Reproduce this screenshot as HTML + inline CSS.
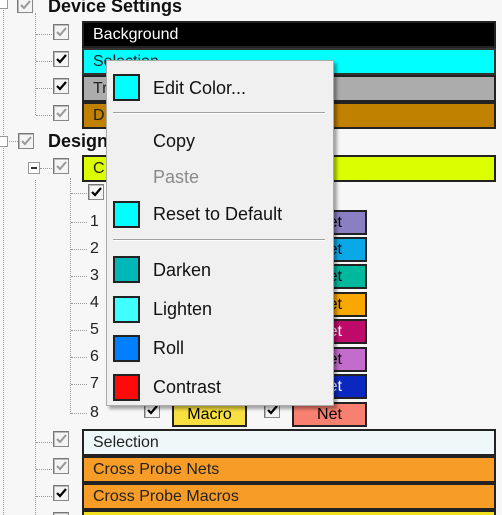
<!DOCTYPE html>
<html style="overflow:hidden;width:502px;height:515px"><head><meta charset="utf-8"><style>
body{margin:0;width:502px;height:515px;overflow:hidden;background:#f7f7f7;font-family:"Liberation Sans",Arial,sans-serif;position:relative}
.a{position:absolute}
.bar{position:absolute;left:82px;width:401px;height:23px;border:2px solid #222;font-size:16px;line-height:23px;padding-left:9px;box-sizing:content-box}
.cb{position:absolute;width:14px;height:14px;border:1px solid #888;border-top-color:#777;border-left-color:#777;background:#f4f4f4;box-shadow:inset 1px 1px 0 #bbb}
.cb svg{position:absolute;left:1px;top:1px}
.vl{position:absolute;border-left:1px dotted #999;width:0}
.hl{position:absolute;border-top:1px dotted #999;height:0}
.net{position:absolute;left:292px;width:71px;height:21px;border:2px solid #222;font-size:16px;line-height:21px;text-align:center}
.num{position:absolute;left:90px;font-size:16px;color:#222}
.menu{position:absolute;left:106px;top:60px;width:226px;height:344px;background:#f0f0f0;border:1px solid #aaa;box-shadow:3px 3px 3px rgba(0,0,0,.35)}
.mi{position:absolute;left:46px;font-size:18px;color:#111}
.sw{position:absolute;left:6px;width:23px;height:23px;border:2px solid #222}
.sep{position:absolute;left:6px;width:212px;border-top:1px solid #a0a0a0;border-bottom:1px solid #fff}
.bold{position:absolute;font-weight:bold;font-size:18px;color:#111}
</style></head><body>
<div class="vl" style="left:3px;top:0;height:515px"></div>
<div class="vl" style="left:35px;top:13px;height:102px"></div>
<div class="vl" style="left:35px;top:180px;height:335px"></div>
<div class="vl" style="left:70px;top:178px;height:236px"></div>
<div class="hl" style="left:36px;top:34px;width:18px"></div>
<div class="hl" style="left:36px;top:61px;width:18px"></div>
<div class="hl" style="left:36px;top:88px;width:18px"></div>
<div class="hl" style="left:36px;top:115px;width:18px"></div>
<div class="hl" style="left:4px;top:141px;width:14px"></div>
<div class="hl" style="left:40px;top:168px;width:12px"></div>
<div class="hl" style="left:71px;top:193px;width:16px"></div>
<div class="hl" style="left:71px;top:222px;width:16px"></div>
<div class="hl" style="left:71px;top:249px;width:16px"></div>
<div class="hl" style="left:71px;top:276px;width:16px"></div>
<div class="hl" style="left:71px;top:303px;width:16px"></div>
<div class="hl" style="left:71px;top:330px;width:16px"></div>
<div class="hl" style="left:71px;top:357px;width:16px"></div>
<div class="hl" style="left:71px;top:384px;width:16px"></div>
<div class="hl" style="left:71px;top:413px;width:16px"></div>
<div class="hl" style="left:36px;top:442px;width:18px"></div>
<div class="hl" style="left:36px;top:469px;width:18px"></div>
<div class="hl" style="left:36px;top:496px;width:18px"></div>

<div class="a" style="left:-3px;top:-2px;width:9px;height:9px;border:1px solid #999;background:#fff"></div>
<div class="cb" style="left:17px;top:-3px"><svg width="12" height="12"><path d="M2 6l3 3 6-7" stroke="#999" stroke-width="2" fill="none"/></svg></div>
<div class="bold" style="left:48px;top:-4px">Device Settings</div>

<div class="cb" style="left:53px;top:24px"><svg width="12" height="12"><path d="M2 6l3 3 6-7" stroke="#999" stroke-width="2" fill="none"/></svg></div>
<div class="bar" style="top:21px;background:#000;color:#fff">Background</div>
<div class="cb" style="left:53px;top:51px"><svg width="12" height="12"><path d="M2 6l3 3 6-7" stroke="#000" stroke-width="2.2" fill="none"/></svg></div>
<div class="bar" style="top:48px;background:#00ffff;color:#222;border-color:#333">Selection</div>
<div class="cb" style="left:53px;top:78px"><svg width="12" height="12"><path d="M2 6l3 3 6-7" stroke="#000" stroke-width="2.2" fill="none"/></svg></div>
<div class="bar" style="top:75px;background:#acacac;color:#222">Tr</div>
<div class="cb" style="left:53px;top:105px"><svg width="12" height="12"><path d="M2 6l3 3 6-7" stroke="#999" stroke-width="2" fill="none"/></svg></div>
<div class="bar" style="top:102px;background:#c08000;color:#222">D</div>

<div class="a" style="left:-3px;top:136px;width:9px;height:9px;border:1px solid #999;background:#fff"></div>
<div class="cb" style="left:18px;top:133px"><svg width="12" height="12"><path d="M2 6l3 3 6-7" stroke="#999" stroke-width="2" fill="none"/></svg></div>
<div class="bold" style="left:48px;top:131px">Design</div>
<div class="a" style="left:28px;top:162px;width:10px;height:10px;border:1px solid #999;background:#fff"><div class="a" style="left:2px;top:4px;width:6px;height:2px;background:#333"></div></div>
<div class="cb" style="left:53px;top:158px"><svg width="12" height="12"><path d="M2 6l3 3 6-7" stroke="#999" stroke-width="2" fill="none"/></svg></div>
<div class="bar" style="top:155px;background:#dcff00;color:#222">C</div>
<div class="cb" style="left:88px;top:184px"><svg width="12" height="12"><path d="M2 6l3 3 6-7" stroke="#000" stroke-width="2.2" fill="none"/></svg></div>

<div class="num" style="top:213px">1</div>
<div class="num" style="top:240px">2</div>
<div class="num" style="top:267px">3</div>
<div class="num" style="top:294px">4</div>
<div class="num" style="top:321px">5</div>
<div class="num" style="top:348px">6</div>
<div class="num" style="top:375px">7</div>
<div class="num" style="top:404px">8</div>

<div class="net" style="top:210px;background:#8b7fc4">Net</div>
<div class="net" style="top:237px;background:#0aa8e6">Net</div>
<div class="net" style="top:264px;background:#00b89c">Net</div>
<div class="net" style="top:292px;background:#f8a800">Net</div>
<div class="net" style="top:319px;background:#c00a6a;color:#fff">Net</div>
<div class="net" style="top:347px;background:#c46ccc">Net</div>
<div class="net" style="top:374px;background:#0a28c0;color:#fff">Net</div>
<div class="net" style="top:402px;background:#f88070">Net</div>
<div class="a" style="left:172px;top:402px;width:71px;height:21px;border:2px solid #222;background:#f8e040;font-size:16px;line-height:21px;text-align:center">Macro</div>
<div class="cb" style="left:144px;top:402px"><svg width="12" height="12"><path d="M2 6l3 3 6-7" stroke="#000" stroke-width="2.2" fill="none"/></svg></div>
<div class="cb" style="left:264px;top:402px"><svg width="12" height="12"><path d="M2 6l3 3 6-7" stroke="#000" stroke-width="2.2" fill="none"/></svg></div>

<div class="cb" style="left:53px;top:431px"><svg width="12" height="12"><path d="M2 6l3 3 6-7" stroke="#999" stroke-width="2" fill="none"/></svg></div>
<div class="bar" style="top:429px;background:#eef8f8;color:#222">Selection</div>
<div class="cb" style="left:53px;top:458px"><svg width="12" height="12"><path d="M2 6l3 3 6-7" stroke="#999" stroke-width="2" fill="none"/></svg></div>
<div class="bar" style="top:456px;background:#f89c28;color:#222">Cross Probe Nets</div>
<div class="cb" style="left:53px;top:485px"><svg width="12" height="12"><path d="M2 6l3 3 6-7" stroke="#000" stroke-width="2.2" fill="none"/></svg></div>
<div class="bar" style="top:483px;background:#f89c28;color:#222">Cross Probe Macros</div>
<div class="cb" style="left:53px;top:512px;height:3px"></div>
<div class="bar" style="top:510px;height:3px;border-bottom:0;background:#f0e020"></div>

<div class="menu">
  <div class="sw" style="top:13px;background:#00ffff"></div>
  <div class="mi" style="top:17px">Edit Color...</div>
  <div class="sep" style="top:51px"></div>
  <div class="mi" style="top:70px">Copy</div>
  <div class="mi" style="top:106px;color:#8a8a8a">Paste</div>
  <div class="sw" style="top:140px;background:#00ffff"></div>
  <div class="mi" style="top:143px">Reset to Default</div>
  <div class="sep" style="top:178px"></div>
  <div class="sw" style="top:195px;background:#00b8b8"></div>
  <div class="mi" style="top:199px">Darken</div>
  <div class="sw" style="top:235px;background:#40ffff"></div>
  <div class="mi" style="top:238px">Lighten</div>
  <div class="sw" style="top:274px;background:#0080ff"></div>
  <div class="mi" style="top:277px">Roll</div>
  <div class="sw" style="top:313px;background:#ff0a0a"></div>
  <div class="mi" style="top:316px">Contrast</div>
</div>
</body></html>
